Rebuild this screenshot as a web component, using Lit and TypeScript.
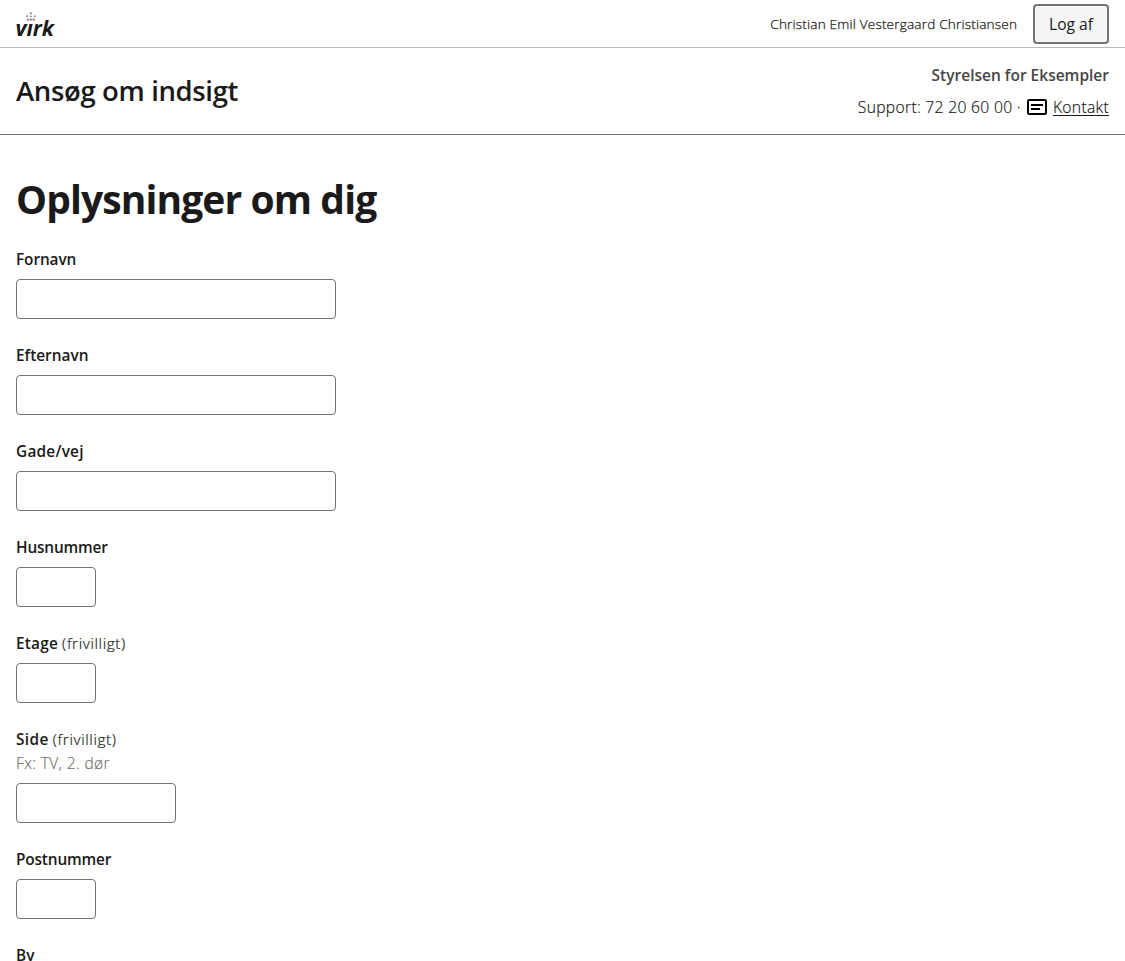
import { LitElement, html, css, nothing } from "lit";
import { styleMap } from "lit/directives/style-map.js";

interface Field {
  id: string;
  label: string;
  size: "wide" | "medium" | "small";
  tracking?: number;
  optional?: boolean;
  hint?: string;
}

const FIELDS: Field[] = [
  { id: "fornavn", label: "Fornavn", size: "wide", tracking: -0.1 },
  { id: "efternavn", label: "Efternavn", size: "wide" },
  { id: "gade", label: "Gade/vej", size: "wide", tracking: 0.22 },
  { id: "husnummer", label: "Husnummer", size: "small", tracking: -0.18 },
  { id: "etage", label: "Etage", size: "small", optional: true, tracking: 0.22 },
  { id: "side", label: "Side", size: "medium", optional: true, hint: "Fx: TV, 2. dør", tracking: 0.4 },
  { id: "postnummer", label: "Postnummer", size: "small", tracking: -0.16 },
  { id: "by", label: "By", size: "wide" },
];

class FormField extends LitElement {
  static properties = { field: { attribute: false } };
  declare field: Field;

  static styles = css`
    :host { display: flex; flex-direction: column; }
    .label { display: block; height: 24px; font-weight: 600; font-size: 15.4px; line-height: 26px; white-space: pre; color: #1a1a1a; }
    .optional { font-weight: 300; line-height: 0; letter-spacing: 0.6px; -webkit-text-stroke: 0.2px; }
    .hint { font-weight: 300; font-size: 15.5px; line-height: 24px; letter-spacing: 0.38px; color: #747474; -webkit-text-stroke: 0.2px; }
    input {
      box-sizing: border-box; height: 40px; margin: 8px 0 0; padding: 0 8px;
      border: 1px solid #747474; border-radius: 4px; background: #fff;
      font: inherit; color: #1a1a1a; outline: none;
    }
    .wide { width: 320px; }
    .medium { width: 160px; }
    .small { width: 80px; }
  `;

  render() {
    const f = this.field;
    return html`
      <label class="label" for=${f.id}><span style=${styleMap({ letterSpacing: `${f.tracking ?? 0}px` })}>${f.label}</span>${f.optional ? html` <span class="optional">(frivilligt)</span>` : nothing}</label>
      ${f.hint ? html`<span class="hint">${f.hint}</span>` : nothing}
      <input id=${f.id} class=${f.size} type="text" />
    `;
  }
}
customElements.define("form-field", FormField);

class AppRoot extends LitElement {
  static styles = css`
    :host {
      display: block; height: 100vh; overflow: hidden; background: #fff; color: #1a1a1a;
      font-family: "Open Sans", "Noto Sans", sans-serif; font-size: 16px; line-height: 24px;
    }
    .portal {
      box-sizing: border-box; height: 48px; padding: 0 16px; border-bottom: 1px solid #bababa;
      display: flex; align-items: center; justify-content: space-between;
    }
    .logo { display: block; width: 44px; height: 36px; overflow: visible; }
    .logo-text { font: italic 700 21.5px "Open Sans", sans-serif; fill: #1a1a1a; }
    .user { display: flex; align-items: center; gap: 16px; }
    .name { font-size: 13.6px; font-weight: 300; letter-spacing: 0.18px; margin-right: -0.2px; -webkit-text-stroke: 0.25px; }
    .logout {
      box-sizing: border-box; width: 76px; height: 40px; padding: 0; border: 2px solid #747474;
      border-radius: 4px; background: #f5f5f5; color: #1a1a1a; font: 400 15.6px/24px "Open Sans", sans-serif;
    }
    .solution {
      box-sizing: border-box; height: 87px; padding: 0 16px; border-bottom: 1px solid #747474;
      display: flex; align-items: center; justify-content: space-between;
    }
    .title { font-size: 27.5px; font-weight: 600; letter-spacing: -0.36px; }
    .agency { display: flex; flex-direction: column; align-items: flex-end; gap: 8px; }
    .authority { font-size: 15.5px; font-weight: 600; color: #454545; }
    .support { display: flex; align-items: center; font-size: 15.7px; font-weight: 300; letter-spacing: 0.3px; -webkit-text-stroke: 0.2px; }
    .mail { width: 20px; height: 16px; margin: 0 6px; -webkit-text-stroke: 0; }
    .contact { color: #1a1a1a; text-decoration: underline; text-underline-offset: 2px; text-decoration-thickness: 1px; }
    .content { padding: 40px 16px 0; }
    h1 { margin: 0 0 24px; font-size: 39px; line-height: 48px; font-weight: 700; letter-spacing: -0.9px; }
    .fields { display: flex; flex-direction: column; gap: 24px; }
  `;

  render() {
    return html`
      <header class="portal">
        <svg class="logo" viewBox="0 0 44 36" aria-label="virk">
          <g fill="#8a8a8a">
            <circle cx="14.8" cy="7.3" r="1.1" />
            <circle cx="11" cy="10.3" r="1" />
            <circle cx="18.8" cy="10.3" r="1" />
            <circle cx="14.8" cy="10.4" r="1" />
            <circle cx="12" cy="13.6" r="1.2" />
            <circle cx="14.8" cy="13.6" r="1.2" />
            <circle cx="17.8" cy="13.6" r="1.2" />
          </g>
          <text class="logo-text" x="-0.5" y="30" textLength="38.5" lengthAdjust="spacingAndGlyphs">vırk</text>
        </svg>
        <div class="user">
          <span class="name">Christian Emil Vestergaard Christiansen</span>
          <button class="logout" type="button">Log af</button>
        </div>
      </header>
      <div class="solution">
        <span class="title">Ansøg om indsigt</span>
        <div class="agency">
          <span class="authority">Styrelsen for Eksempler</span>
          <div class="support">
            <span>Support: 72 20 60 00 ·</span>
            <svg class="mail" viewBox="0 0 20 16" aria-hidden="true">
              <rect x="1" y="1" width="18" height="14" rx="1" fill="none" stroke="#000" stroke-width="2" />
              <path d="M4 6h12M4 10h9" stroke="#000" stroke-width="2" />
            </svg>
            <a class="contact">Kontakt</a>
          </div>
        </div>
      </div>
      <main class="content">
        <h1>Oplysninger om dig</h1>
        <div class="fields">
          ${FIELDS.map((f) => html`<form-field .field=${f}></form-field>`)}
        </div>
      </main>
    `;
  }
}
customElements.define("app-root", AppRoot);
